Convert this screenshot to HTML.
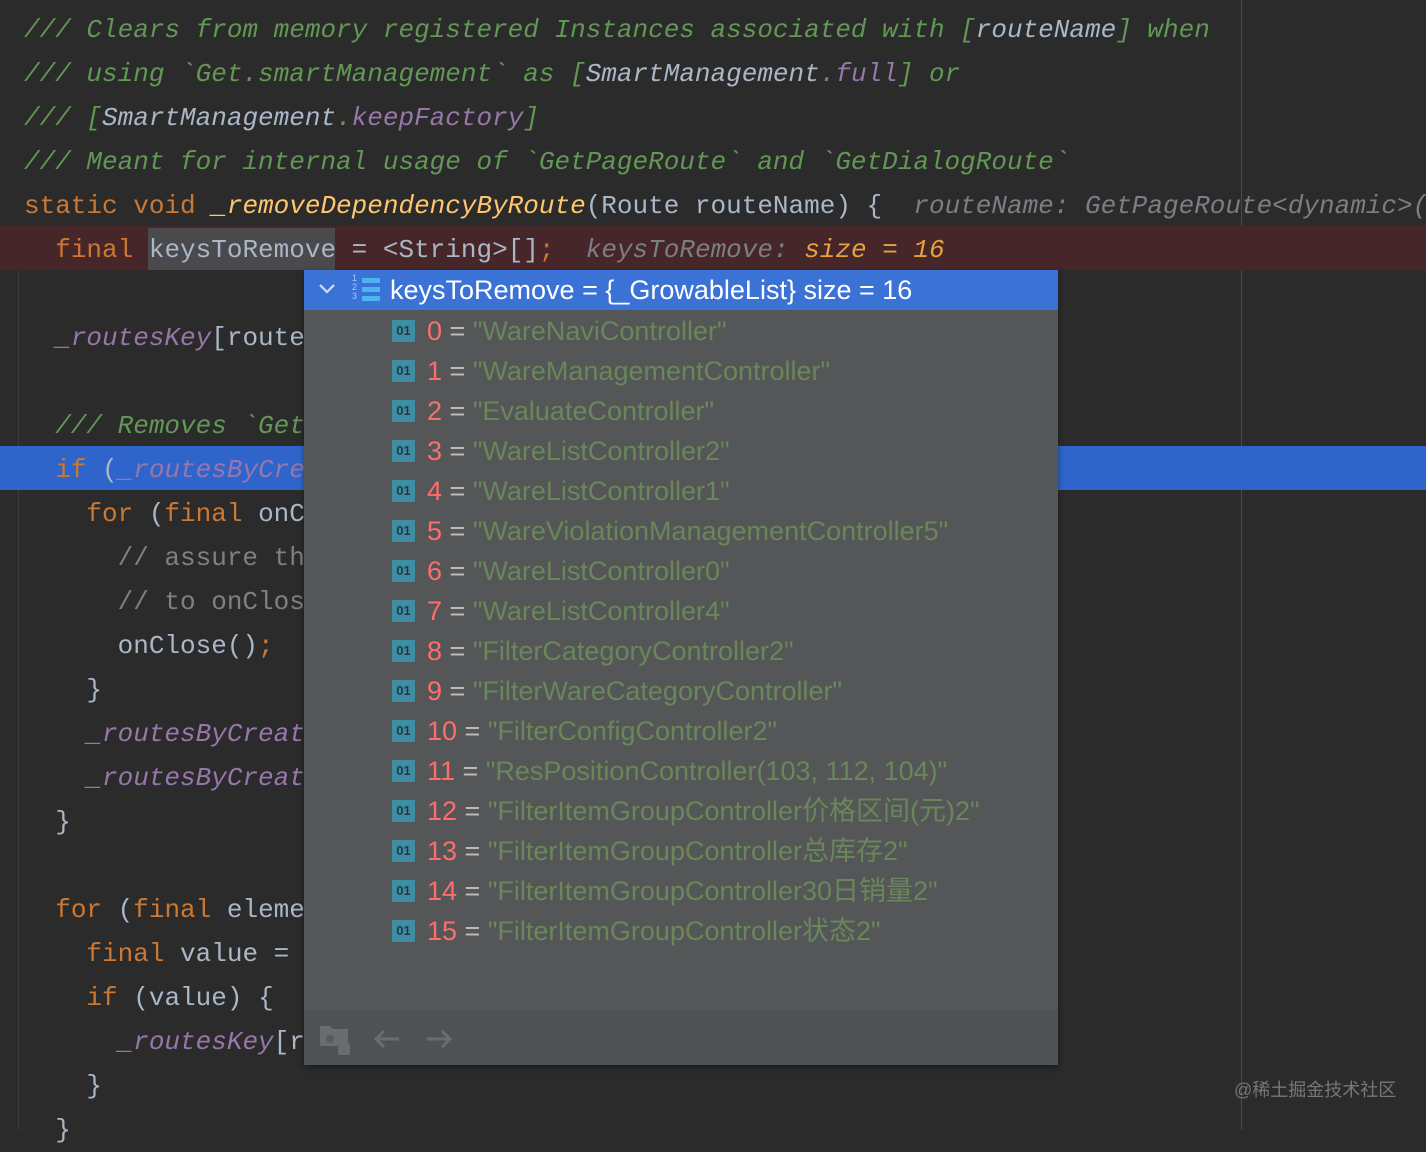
<!DOCTYPE html>
<html><head><meta charset="utf-8"><style>
body{margin:0;width:1426px;height:1130px;background:#2b2b2b;overflow:hidden;position:relative;font-family:"Liberation Mono","DejaVu Sans Mono",monospace;font-size:26px;}
.l{position:absolute;left:24px;height:44px;line-height:44px;white-space:pre;color:#a9b7c6;margin-top:2px}
.c{color:#629755;font-style:italic}.k{color:#cc7832}.p{color:#9876aa;font-style:italic}.f{color:#ffc66d;font-style:italic}
.h{color:#7a7e85;font-style:italic}.o{color:#e6a23c;font-style:italic}.g{color:#808080}
.pop{position:absolute;left:304px;top:270px;width:754px;height:795px;background:#545658;box-shadow:0 2px 6px rgba(0,0,0,.4);font-family:"Liberation Sans","Noto Sans CJK SC",sans-serif;font-size:27px;}
.hd{position:absolute;left:0;top:0;width:754px;height:40px;background:#3a72d5;color:#fff;line-height:40px}
.it{position:absolute;left:88px;height:40px;line-height:40px;white-space:pre;color:#bbbbbb}
.ic{display:inline-block;width:23px;height:22px;background:#3d8ea3;color:#1f3a44;font-size:13px;font-weight:bold;line-height:22px;text-align:center;vertical-align:middle;margin-right:12px;position:relative;top:-2px}
.n{color:#ff6e6b}.s{color:#6a8759}
.tb{position:absolute;left:0;top:740px;width:754px;height:55px;background:#4e5254}
</style></head><body>
<div style="position:absolute;left:1241px;top:0;width:1px;height:1130px;background:#4a4a4a"></div>
<div style="position:absolute;left:18px;top:226px;width:1px;height:904px;background:#3c3c3c"></div>
<div style="position:absolute;left:0;top:226px;width:1426px;height:44px;background:#462629"></div>
<div style="position:absolute;left:0;top:446px;width:1426px;height:44px;background:#2f65ca"></div>
<div style="position:absolute;left:148px;top:228px;width:187px;height:42px;background:#4a4a4c"></div>
<div class="l c" style="top:6px">/// Clears from memory registered Instances associated with [<span style="color:#a9b7c6">routeName</span>] when</div>
<div class="l c" style="top:50px">/// using `Get.smartManagement` as [<span style="color:#a9b7c6">SmartManagement</span>.<span class="p">full</span>] or</div>
<div class="l c" style="top:94px">/// [<span style="color:#a9b7c6">SmartManagement</span>.<span class="p">keepFactory</span>]</div>
<div class="l c" style="top:138px">/// Meant for internal usage of `GetPageRoute` and `GetDialogRoute`</div>
<div class="l" style="top:182px"><span class="k">static void </span><span class="f">_removeDependencyByRoute</span>(Route routeName) {  <span class="h">routeName: GetPageRoute&lt;dynamic&gt;(</span></div>
<div class="l" style="top:226px">  <span class="k">final </span>keysToRemove = &lt;String&gt;[]<span class="k">;</span>  <span class="h">keysToRemove: </span><span class="o">size = 16</span></div>
<div class="l" style="top:314px">  <span class="p">_routesKey</span>[route</div>
<div class="l c" style="top:402px">  /// Removes `Get</div>
<div class="l" style="top:446px">  <span class="k">if</span> (<span class="p">_routesByCre</span></div>
<div class="l" style="top:490px">    <span class="k">for</span> (<span class="k">final</span> onC</div>
<div class="l g" style="top:534px">      // assure th                                        ence</div>
<div class="l g" style="top:578px">      // to onClos</div>
<div class="l" style="top:622px">      onClose()<span class="k">;</span></div>
<div class="l" style="top:666px">    }</div>
<div class="l" style="top:710px">    <span class="p">_routesByCreat</span></div>
<div class="l" style="top:754px">    <span class="p">_routesByCreat</span></div>
<div class="l" style="top:798px">  }</div>
<div class="l" style="top:886px">  <span class="k">for</span> (<span class="k">final</span> eleme</div>
<div class="l" style="top:930px">    <span class="k">final</span> value =</div>
<div class="l" style="top:974px">    <span class="k">if</span> (value) {</div>
<div class="l" style="top:1018px">      <span class="p">_routesKey</span>[r</div>
<div class="l" style="top:1062px">    }</div>
<div class="l" style="top:1106px">  }</div>
<div style="position:absolute;left:1234px;top:1076px;color:#777;font-family:'Liberation Sans','Noto Sans CJK SC',sans-serif;font-size:18px">@稀土掘金技术社区</div>
<div class="pop">
<div class="hd">
<svg style="position:absolute;left:14px;top:12px" width="18" height="14"><path d="M2 3l7 7 7-7" stroke="#cfe0ff" stroke-width="2.2" fill="none"/></svg>
<span style="position:absolute;left:48px;top:4px;font-size:9px;line-height:9px;color:#a9c8ff">1<br>2<br>3</span>
<span style="position:absolute;left:58px;top:8px;width:18px;height:5px;background:#4eb4f0"></span>
<span style="position:absolute;left:58px;top:17px;width:18px;height:5px;background:#4eb4f0"></span>
<span style="position:absolute;left:58px;top:26px;width:18px;height:5px;background:#4eb4f0"></span>
<span style="position:absolute;left:86px">keysToRemove = {_GrowableList} size = 16</span></div>
<div class="it" style="top:41px"><span class="ic">01</span><span class="n">0</span> = <span class="s">"WareNaviController"</span></div>
<div class="it" style="top:81px"><span class="ic">01</span><span class="n">1</span> = <span class="s">"WareManagementController"</span></div>
<div class="it" style="top:121px"><span class="ic">01</span><span class="n">2</span> = <span class="s">"EvaluateController"</span></div>
<div class="it" style="top:161px"><span class="ic">01</span><span class="n">3</span> = <span class="s">"WareListController2"</span></div>
<div class="it" style="top:201px"><span class="ic">01</span><span class="n">4</span> = <span class="s">"WareListController1"</span></div>
<div class="it" style="top:241px"><span class="ic">01</span><span class="n">5</span> = <span class="s">"WareViolationManagementController5"</span></div>
<div class="it" style="top:281px"><span class="ic">01</span><span class="n">6</span> = <span class="s">"WareListController0"</span></div>
<div class="it" style="top:321px"><span class="ic">01</span><span class="n">7</span> = <span class="s">"WareListController4"</span></div>
<div class="it" style="top:361px"><span class="ic">01</span><span class="n">8</span> = <span class="s">"FilterCategoryController2"</span></div>
<div class="it" style="top:401px"><span class="ic">01</span><span class="n">9</span> = <span class="s">"FilterWareCategoryController"</span></div>
<div class="it" style="top:441px"><span class="ic">01</span><span class="n">10</span> = <span class="s">"FilterConfigController2"</span></div>
<div class="it" style="top:481px"><span class="ic">01</span><span class="n">11</span> = <span class="s">"ResPositionController(103, 112, 104)"</span></div>
<div class="it" style="top:521px"><span class="ic">01</span><span class="n">12</span> = <span class="s">"FilterItemGroupController价格区间(元)2"</span></div>
<div class="it" style="top:561px"><span class="ic">01</span><span class="n">13</span> = <span class="s">"FilterItemGroupController总库存2"</span></div>
<div class="it" style="top:601px"><span class="ic">01</span><span class="n">14</span> = <span class="s">"FilterItemGroupController30日销量2"</span></div>
<div class="it" style="top:641px"><span class="ic">01</span><span class="n">15</span> = <span class="s">"FilterItemGroupController状态2"</span></div>
<div class="tb">
<svg style="position:absolute;left:16px;top:16px" width="32" height="32"><path d="M0 0h10l3 3h15v17H0z" fill="#6a6d70"/><circle cx="10" cy="13" r="4" fill="#585b5e"/><rect x="18" y="17" width="12" height="12" rx="2" fill="#6a6d70"/></svg>
<svg style="position:absolute;left:68px;top:18px" width="30" height="22"><path d="M27 11H4M12 3l-8 8 8 8" stroke="#6a6d70" stroke-width="3" fill="none"/></svg>
<svg style="position:absolute;left:120px;top:18px" width="30" height="22"><path d="M3 11h23M18 3l8 8-8 8" stroke="#6a6d70" stroke-width="3" fill="none"/></svg>
</div>
</div>
</body></html>
